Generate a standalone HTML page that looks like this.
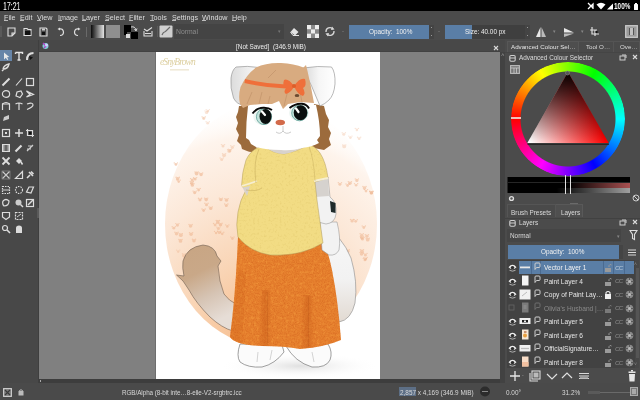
<!DOCTYPE html>
<html><head><meta charset="utf-8">
<style>
*{margin:0;padding:0;box-sizing:border-box}
html,body{width:640px;height:400px;overflow:hidden;background:#4a4a4a;font-family:"Liberation Sans",sans-serif;color:#e6e6e6}
.a{position:absolute;display:block}
.t{position:absolute;white-space:nowrap;line-height:1;will-change:transform}
</style></head><body>

<div class="a" style="left:0px;top:0px;width:640px;height:11px;background:#000;"></div>
<div class="a" style="left:0px;top:11px;width:640px;height:29px;background:#4b4b4b;"></div>
<div class="a" style="left:0px;top:40px;width:39px;height:343px;background:#484848;"></div>
<div class="a" style="left:39px;top:40px;width:466px;height:12px;background:#484848;"></div>
<div class="a" style="left:39px;top:51px;width:461px;height:1px;background:#424242;"></div>
<div class="a" style="left:39px;top:52px;width:461px;height:327px;background:#808080;"></div>
<div class="a" style="left:39px;top:379px;width:466px;height:4px;background:#3d3d3d;"></div>
<div class="a" style="left:500px;top:52px;width:5px;height:331px;background:#424242;"></div>
<div class="a" style="left:505px;top:40px;width:135px;height:343px;background:#4b4b4b;"></div>
<div class="a" style="left:0px;top:383px;width:640px;height:17px;background:#4a4a4a;"></div>
<div class="t" style="left:3px;top:2.40px;font-size:10.2px;color:#ffffff;transform:scaleX(0.68);transform-origin:0 0">17:21</div>
<div class="t" style="left:614px;top:2.40px;font-size:9.2px;color:#ffffff;transform:scaleX(0.7);transform-origin:0 0;font-weight:bold">100%</div>
<div class="a" style="left:634px;top:3.5px;width:4px;height:6px;background:#fff;border-radius:0.5px"></div>
<div class="a" style="left:635px;top:2.5px;width:2px;height:1px;background:#fff;"></div>
<svg class="a" style="left:606px;top:2px;" width="8" height="8" viewBox="0 0 8 8"><path d="M1 7.5 L7 1.5 L7 7.5 Z" fill="#fff"/></svg>
<svg class="a" style="left:596px;top:2px;" width="10" height="8" viewBox="0 0 10 8"><path d="M0.5 2.5 Q5 -1 9.5 2.5 L5 7.5 Z" fill="#fff"/></svg>
<svg class="a" style="left:587px;top:2px;" width="8" height="8" viewBox="0 0 8 8"><path d="M1 1 L6 6 M1 7 L4 4 L6 2 L6 7" stroke="#fff" stroke-width="1.3" fill="none"/></svg>
<div class="t" style="left:4px;top:14.00px;font-size:7.2px;color:#dcdcdc;">File</div>
<div class="a" style="left:4px;top:20.3px;width:3.5px;height:0.8px;background:#bdbdbd;"></div>
<div class="t" style="left:20px;top:14.00px;font-size:7.2px;color:#dcdcdc;">Edit</div>
<div class="a" style="left:20px;top:20.3px;width:3.5px;height:0.8px;background:#bdbdbd;"></div>
<div class="t" style="left:37px;top:14.00px;font-size:7.2px;color:#dcdcdc;">View</div>
<div class="a" style="left:37px;top:20.3px;width:3.5px;height:0.8px;background:#bdbdbd;"></div>
<div class="t" style="left:58px;top:14.00px;font-size:7.2px;color:#dcdcdc;">Image</div>
<div class="a" style="left:58px;top:20.3px;width:3.5px;height:0.8px;background:#bdbdbd;"></div>
<div class="t" style="left:82px;top:14.00px;font-size:7.2px;color:#dcdcdc;">Layer</div>
<div class="a" style="left:82px;top:20.3px;width:3.5px;height:0.8px;background:#bdbdbd;"></div>
<div class="t" style="left:105px;top:14.00px;font-size:7.2px;color:#dcdcdc;">Select</div>
<div class="a" style="left:105px;top:20.3px;width:3.5px;height:0.8px;background:#bdbdbd;"></div>
<div class="t" style="left:129px;top:14.00px;font-size:7.2px;color:#dcdcdc;">Filter</div>
<div class="a" style="left:129px;top:20.3px;width:3.5px;height:0.8px;background:#bdbdbd;"></div>
<div class="t" style="left:150px;top:14.00px;font-size:7.2px;color:#dcdcdc;">Tools</div>
<div class="a" style="left:150px;top:20.3px;width:3.5px;height:0.8px;background:#bdbdbd;"></div>
<div class="t" style="left:172px;top:14.00px;font-size:7.2px;color:#dcdcdc;">Settings</div>
<div class="a" style="left:172px;top:20.3px;width:3.5px;height:0.8px;background:#bdbdbd;"></div>
<div class="t" style="left:202px;top:14.00px;font-size:7.2px;color:#dcdcdc;">Window</div>
<div class="a" style="left:202px;top:20.3px;width:3.5px;height:0.8px;background:#bdbdbd;"></div>
<div class="t" style="left:232px;top:14.00px;font-size:7.2px;color:#dcdcdc;">Help</div>
<div class="a" style="left:232px;top:20.3px;width:3.5px;height:0.8px;background:#bdbdbd;"></div>
<div class="a" style="left:0px;top:26px;width:2px;height:11px;background:#5a5a5a;"></div>
<svg class="a" style="left:7px;top:27px;" width="9" height="10" viewBox="0 0 9 10"><path d="M1 1 H8 V6 L5 9 H1 Z M5 9 V6 H8" stroke="#e0e0e0" stroke-width="1.1" fill="none"/></svg>
<svg class="a" style="left:23px;top:27px;" width="9" height="10" viewBox="0 0 9 10"><path d="M1 1.5 H4 L5 2.5 H8 V8.5 H1 Z" stroke="#e0e0e0" stroke-width="1.1" fill="none"/><rect x="2" y="4" width="5.5" height="4" fill="#111"/></svg>
<svg class="a" style="left:39px;top:27px;" width="9" height="10" viewBox="0 0 9 10"><path d="M1 1 H7 L8 2 V9 H1 Z" stroke="#e0e0e0" stroke-width="1.1" fill="none"/><rect x="3" y="5" width="3" height="3" fill="#111"/><rect x="3" y="1.5" width="3" height="2" fill="#ccc"/></svg>
<svg class="a" style="left:57px;top:27px;" width="8" height="10" viewBox="0 0 8 10"><path d="M2 2 Q6 1 6.5 5 Q6.5 8.5 3 8.5" stroke="#e0e0e0" stroke-width="1.2" fill="none"/><path d="M0.5 2 L3 0.5 L3 3.5 Z" fill="#e0e0e0"/></svg>
<svg class="a" style="left:73px;top:27px;" width="8" height="10" viewBox="0 0 8 10"><path d="M6 2 Q2 1 1.5 5 Q1.5 8.5 5 8.5" stroke="#e0e0e0" stroke-width="1.2" fill="none"/><path d="M7.5 2 L5 0.5 L5 3.5 Z" fill="#e0e0e0"/></svg>
<div class="a" style="left:86px;top:27px;width:1px;height:10px;background:#6a6a6a;"></div>
<div class="a" style="left:91px;top:25px;width:13px;height:13px;background:linear-gradient(90deg,#000,#fff);opacity:.85"></div>
<div class="a" style="left:106px;top:25px;width:14px;height:13px;background:#8f8f8f;"></div>
<div class="a" style="left:124px;top:25px;width:7px;height:7px;background:#000;"></div>
<div class="a" style="left:131px;top:32px;width:7px;height:7px;background:#000;"></div>
<svg class="a" style="left:130px;top:25px;" width="8" height="7" viewBox="0 0 8 7"><path d="M1 2 Q5 1 6 5 M4.5 4 L6 6 L7 3.5" stroke="#ddd" stroke-width="1" fill="none"/></svg>
<svg class="a" style="left:124px;top:32px;" width="7" height="7" viewBox="0 0 7 7"><rect x="0" y="0" width="3" height="3" fill="#000"/><rect x="2" y="2" width="4" height="4" fill="#ddd"/></svg>
<svg class="a" style="left:143px;top:26px;" width="10" height="11" viewBox="0 0 10 11"><path d="M1 3 L4 5 L9 1.5 M1 5 V10 H9 V5" stroke="#ddd" stroke-width="1.1" fill="none"/><rect x="2" y="7" width="6" height="1" fill="#ddd"/></svg>
<div class="a" style="left:157px;top:26px;width:1px;height:11px;background:#5c5c5c;"></div>
<svg class="a" style="left:159px;top:25px;" width="14" height="13" viewBox="0 0 14 13"><rect x="0.5" y="0.5" width="13" height="12" rx="1" fill="#cfcfcf"/><path d="M3 10 Q4 7 6.5 6.5 L11 2" stroke="#6a6a6a" stroke-width="1.2" fill="none"/></svg>
<div class="a" style="left:174px;top:24px;width:110px;height:15px;background:#444444;"></div>
<div class="t" style="left:176px;top:28.70px;font-size:6.8px;color:#8c8c8c;">Normal</div>
<div class="t" style="left:278px;top:29.00px;font-size:5px;color:#777;">▾</div>
<svg class="a" style="left:289px;top:27px;" width="11" height="10" viewBox="0 0 11 10"><path d="M5 1 L9.5 5 L6 8.5 L1.5 5 Z" fill="#e4e4e4"/><path d="M1.5 5 L4 8.5 H10" stroke="#e4e4e4" stroke-width="1" fill="none"/></svg>
<svg class="a" style="left:307px;top:25px;" width="12" height="13" viewBox="0 0 12 13"><rect width="12" height="13" fill="#bdbdbd"/><rect x="0" y="0" width="4" height="4.3" fill="#eee"/><rect x="8" y="0" width="4" height="4.3" fill="#eee"/><rect x="4" y="4.3" width="4" height="4.3" fill="#eee"/><rect x="0" y="8.6" width="4" height="4.4" fill="#eee"/><rect x="8" y="8.6" width="4" height="4.4" fill="#eee"/><rect x="4" y="0" width="4" height="4.3" fill="#8a8a8a"/><rect x="0" y="4.3" width="4" height="4.3" fill="#8a8a8a"/><rect x="8" y="4.3" width="4" height="4.3" fill="#8a8a8a"/><rect x="4" y="8.6" width="4" height="4.4" fill="#8a8a8a"/></svg>
<svg class="a" style="left:324px;top:26px;" width="12" height="11" viewBox="0 0 12 11"><path d="M2 6 A4 4 0 0 1 9 3 M10 5 A4 4 0 0 1 3 8" stroke="#d8d8d8" stroke-width="1.3" fill="none"/><path d="M8 0.5 L10.5 3.5 L7 4 Z M4 10.5 L1.5 7.5 L5 7 Z" fill="#d8d8d8"/></svg>
<div class="t" style="left:341.5px;top:28.00px;font-size:6px;color:#888;">-</div>
<div class="a" style="left:349px;top:24.5px;width:80px;height:14.5px;background:#5a7ea6;"></div>
<div class="t" style="left:369px;top:28.80px;font-size:6.4px;color:#f0f0f0;">Opacity:&nbsp; 100%</div>
<div class="a" style="left:429px;top:24.5px;width:5px;height:14.5px;background:#444;"></div>
<div class="a" style="left:431px;top:27px;width:1px;height:1.2px;background:#999;"></div>
<div class="a" style="left:431px;top:34.5px;width:1px;height:1.2px;background:#999;"></div>
<div class="t" style="left:437.5px;top:28.00px;font-size:6px;color:#888;">-</div>
<div class="a" style="left:445px;top:24.5px;width:80px;height:14.5px;background:#3f3f3f;"></div>
<div class="a" style="left:445px;top:24.5px;width:27px;height:14.5px;background:#5a7ea6;"></div>
<div class="t" style="left:465px;top:28.80px;font-size:6.4px;color:#f0f0f0;">Size: 40.00 px</div>
<div class="a" style="left:525px;top:24.5px;width:5px;height:14.5px;background:#444;"></div>
<div class="a" style="left:527px;top:27px;width:1px;height:1.2px;background:#999;"></div>
<div class="a" style="left:527px;top:34.5px;width:1px;height:1.2px;background:#999;"></div>
<svg class="a" style="left:535px;top:26px;" width="12" height="12" viewBox="0 0 12 12"><path d="M5.5 1 L1 11 H5.5 Z" fill="#e8e8e8"/><path d="M6.5 1 L11 11 H6.5 Z" fill="#bbb"/></svg>
<div class="t" style="left:552.5px;top:30.00px;font-size:4.5px;color:#888;">▾</div>
<svg class="a" style="left:563px;top:27px;" width="12" height="11" viewBox="0 0 12 11"><path d="M1 1 L11 5.5 H1 Z" fill="#e8e8e8"/><path d="M1 6.5 L11 6.5 L1 10 Z" fill="#bbb"/></svg>
<div class="t" style="left:580.5px;top:30.00px;font-size:4.5px;color:#888;">▾</div>
<svg class="a" style="left:588px;top:26px;" width="13" height="11" viewBox="0 0 13 11"><path d="M4 1 V8 H11 M2 4 H9 M7 4 V10" stroke="#e0e0e0" stroke-width="1.2" fill="none"/><rect x="7.5" y="5" width="2" height="2" fill="#111"/></svg>
<svg class="a" style="left:625px;top:25px;" width="13" height="13" viewBox="0 0 13 13"><rect x="0.7" y="0.7" width="11.6" height="11.6" fill="#9a9a9a" stroke="#c8c8c8" stroke-width="1.3"/><rect x="4" y="3" width="5" height="7" fill="#555"/><rect x="5" y="3" width="3" height="7" fill="#c0c0c0"/></svg>
<svg class="a" style="left:40.5px;top:40.5px;" width="9" height="9" viewBox="0 0 9 9"><circle cx="4.5" cy="5" r="3" fill="#7fd0d8"/><path d="M2 2 L5 5 L3 7" stroke="#b040c0" stroke-width="1.5" fill="none"/><circle cx="5.5" cy="4" r="1.5" fill="#d0d0ff"/></svg>
<div class="t" style="left:235.5px;top:44.00px;font-size:6.4px;color:#ececec;">[Not Saved]&nbsp;&nbsp;(346.9 MiB)</div>
<svg class="a" style="left:493px;top:44.5px;" width="6" height="6" viewBox="0 0 6 6"><path d="M1 1 L5 5 M5 1 L1 5" stroke="#d8d8d8" stroke-width="1.1"/></svg>
<div class="t" style="left:500.5px;top:52.00px;font-size:6px;color:#999;">˄</div>
<div class="a" style="left:0px;top:50px;width:12px;height:11px;background:#6785a8;"></div>
<div class="a" style="left:38px;top:40px;width:1px;height:343px;background:#3f3f3f;"></div>
<svg class="a" style="left:1px;top:50.5px;" width="10" height="10" viewBox="0 0 10 10"><path d="M3 1.5 V8.5 L4.8 6.8 L6.3 9 L7.3 8.4 L6 6.2 L8.3 6 Z" fill="#e8e8e8"/></svg>
<svg class="a" style="left:13.5px;top:50.5px;" width="10" height="10" viewBox="0 0 10 10"><path d="M1.5 1.5 H8.5 V3 M5 1.5 V9 M3.5 9 H6.5 M1.5 1.5 V3" stroke="#e4e4e4" stroke-width="1.4" fill="none"/></svg>
<svg class="a" style="left:25px;top:50.5px;" width="10" height="10" viewBox="0 0 10 10"><path d="M2 9 Q2 2 8.5 2" stroke="#ddd" stroke-width="2" fill="none"/><path d="M4 5 L8 6.5 L5 9 Z" fill="#111"/></svg>
<svg class="a" style="left:1px;top:62px;" width="10" height="10" viewBox="0 0 10 10"><path d="M2 7 Q3 3 8 2 Q7 7 2 7 M1 9 L3 7" stroke="#ddd" stroke-width="1.4" fill="none"/></svg>
<svg class="a" style="left:1px;top:77px;" width="10" height="10" viewBox="0 0 10 10"><path d="M1.5 8.5 L8.5 1.5" stroke="#ddd" stroke-width="2"/></svg>
<svg class="a" style="left:13.5px;top:77px;" width="10" height="10" viewBox="0 0 10 10"><path d="M2 8.5 L8 1.5" stroke="#ddd" stroke-width="1.1"/></svg>
<svg class="a" style="left:25px;top:77px;" width="10" height="10" viewBox="0 0 10 10"><rect x="1.5" y="1.5" width="7" height="7" stroke="#dcdcdc" stroke-width="1.2" fill="none"/></svg>
<svg class="a" style="left:1px;top:89px;" width="10" height="10" viewBox="0 0 10 10"><ellipse cx="5" cy="5" rx="3.6" ry="3.3" stroke="#dcdcdc" stroke-width="1.2" fill="none"/></svg>
<svg class="a" style="left:13.5px;top:89px;" width="10" height="10" viewBox="0 0 10 10"><path d="M2 7 L3 3 L7 2 L8.5 5 L6 8.5 Z" stroke="#dcdcdc" stroke-width="1.2" fill="none"/></svg>
<svg class="a" style="left:25px;top:89px;" width="10" height="10" viewBox="0 0 10 10"><path d="M1.5 2 L8.5 5.5 L1.5 8 L5 5.5 Z" stroke="#dcdcdc" stroke-width="1.2" fill="none"/></svg>
<svg class="a" style="left:1px;top:101px;" width="10" height="10" viewBox="0 0 10 10"><path d="M1.5 9 V3 Q5 0 8.5 3 V9" stroke="#dcdcdc" stroke-width="1.2" fill="none"/><path d="M1 3 H9" stroke="#ddd" stroke-width="1"/></svg>
<svg class="a" style="left:13.5px;top:101px;" width="10" height="10" viewBox="0 0 10 10"><path d="M1.5 3 Q5 1 8.5 3 M5 2 V9" stroke="#dcdcdc" stroke-width="1.2" fill="none"/></svg>
<svg class="a" style="left:25px;top:101px;" width="10" height="10" viewBox="0 0 10 10"><path d="M2 3 Q8 1 8 4 Q8 6 2 8.5" stroke="#dcdcdc" stroke-width="1.2" fill="none"/></svg>
<svg class="a" style="left:1px;top:113px;" width="10" height="10" viewBox="0 0 10 10"><path d="M2 8 L3 4 L8 2 L8 6 Z" fill="#ccc"/></svg>
<svg class="a" style="left:1px;top:128px;" width="10" height="10" viewBox="0 0 10 10"><rect x="1.5" y="1.5" width="7" height="7" stroke="#dcdcdc" stroke-width="1.2" fill="none"/><rect x="4" y="4" width="2" height="2" fill="#ddd"/></svg>
<svg class="a" style="left:13.5px;top:128px;" width="10" height="10" viewBox="0 0 10 10"><path d="M5 1 V9 M1 5 H9" stroke="#ddd" stroke-width="1.5"/></svg>
<svg class="a" style="left:25px;top:128px;" width="10" height="10" viewBox="0 0 10 10"><path d="M2.5 1 V7.5 H9 M1 2.5 H7.5 V9" stroke="#ddd" stroke-width="1.2" fill="none"/><rect x="4" y="4" width="2.5" height="2.5" fill="#111"/></svg>
<svg class="a" style="left:1px;top:143px;" width="10" height="10" viewBox="0 0 10 10"><rect x="1.5" y="1.5" width="7" height="7" fill="#aaa" stroke="#ddd"/><rect x="3.5" y="2" width="3" height="6" fill="#666"/></svg>
<svg class="a" style="left:13.5px;top:143px;" width="10" height="10" viewBox="0 0 10 10"><path d="M1.5 8.5 L7.5 2.5" stroke="#ddd" stroke-width="2.2"/></svg>
<svg class="a" style="left:25px;top:143px;" width="10" height="10" viewBox="0 0 10 10"><path d="M2 8 L8 2 M3 3 H8 M2 6 L6 6" stroke="#ccc" stroke-width="1.2" fill="none"/></svg>
<svg class="a" style="left:1px;top:156px;" width="10" height="10" viewBox="0 0 10 10"><path d="M1.5 1.5 L8.5 8.5 M8.5 1.5 L1.5 8.5" stroke="#ddd" stroke-width="1.8"/></svg>
<svg class="a" style="left:13.5px;top:156px;" width="10" height="10" viewBox="0 0 10 10"><path d="M2 5 L5 2 L8 5 L5 8 Z" fill="#ddd"/><path d="M7 6 L8.5 8.5" stroke="#ddd" stroke-width="1.5"/></svg>
<svg class="a" style="left:1px;top:170px;" width="10" height="10" viewBox="0 0 10 10"><path d="M1.5 1.5 L8.5 8.5 M8.5 1.5 L1.5 8.5" stroke="#ccc" stroke-width="1.2"/><rect x="1" y="1" width="8" height="8" fill="none" stroke="#999" stroke-width=".6"/></svg>
<svg class="a" style="left:13.5px;top:170px;" width="10" height="10" viewBox="0 0 10 10"><path d="M1.5 8.5 H8.5 V1.5 Z" stroke="#dcdcdc" stroke-width="1.2" fill="none"/></svg>
<svg class="a" style="left:25px;top:170px;" width="10" height="10" viewBox="0 0 10 10"><path d="M2 8 L5 5 M4 2 L8 6 M6 1.5 L8.5 4" stroke="#ddd" stroke-width="1.6"/></svg>
<svg class="a" style="left:1px;top:185px;" width="10" height="10" viewBox="0 0 10 10"><rect x="1.5" y="1.5" width="7" height="7" stroke="#dcdcdc" stroke-width="1.2" fill="none" stroke-dasharray="1.5 1"/><path d="M1.5 5 H8.5" stroke="#ccc" stroke-width="1"/></svg>
<svg class="a" style="left:13.5px;top:185px;" width="10" height="10" viewBox="0 0 10 10"><circle cx="5" cy="5" r="3.5" stroke="#dcdcdc" stroke-width="1.2" fill="none" stroke-dasharray="1.5 1"/></svg>
<svg class="a" style="left:25px;top:185px;" width="10" height="10" viewBox="0 0 10 10"><path d="M1.5 7 L4 2 H8.5 L6 8 Z" stroke="#dcdcdc" stroke-width="1.2" fill="none"/></svg>
<svg class="a" style="left:1px;top:198px;" width="10" height="10" viewBox="0 0 10 10"><path d="M2 3 Q5 0 8 3 Q8 8 3 8 Q1 6 2 3" stroke="#dcdcdc" stroke-width="1.2" fill="none"/></svg>
<svg class="a" style="left:13.5px;top:198px;" width="10" height="10" viewBox="0 0 10 10"><circle cx="4.5" cy="4.5" r="3" fill="#ccc"/><path d="M6.5 6.5 L9 9" stroke="#ddd" stroke-width="1.4"/></svg>
<svg class="a" style="left:25px;top:198px;" width="10" height="10" viewBox="0 0 10 10"><rect x="1.5" y="1.5" width="7" height="7" stroke="#dcdcdc" stroke-width="1.2" fill="none"/><path d="M3 7 L8 2" stroke="#ddd" stroke-width="1.5"/></svg>
<svg class="a" style="left:1px;top:211px;" width="10" height="10" viewBox="0 0 10 10"><path d="M1.5 1.5 H8.5 V6 L5 8.5 L1.5 6 Z" stroke="#dcdcdc" stroke-width="1.2" fill="none"/></svg>
<svg class="a" style="left:13.5px;top:211px;" width="10" height="10" viewBox="0 0 10 10"><rect x="1.5" y="1.5" width="7" height="7" stroke="#dcdcdc" stroke-width="1.2" fill="none" stroke-dasharray="2 1"/><path d="M3 6 L7 3" stroke="#ccc" stroke-width="1"/></svg>
<svg class="a" style="left:1px;top:224px;" width="10" height="10" viewBox="0 0 10 10"><circle cx="4" cy="4" r="2.5" stroke="#dcdcdc" stroke-width="1.2" fill="none"/><path d="M6 6 L9 9" stroke="#ddd" stroke-width="1.6"/></svg>
<svg class="a" style="left:13.5px;top:224px;" width="10" height="10" viewBox="0 0 10 10"><path d="M2 9 V4 Q2 1.5 5 1.5 Q8 1.5 8 4 V9 Z" fill="#dcdcdc"/></svg>
<div class="a" style="left:37px;top:208px;width:1.5px;height:10px;background:#5a5a5a;"></div>
<svg class="a" style="left:2.5px;top:387.5px;" width="9" height="9" viewBox="0 0 9 9"><rect x="0.6" y="0.6" width="7.8" height="7.8" fill="#7a7a7a" stroke="#cfcfcf" stroke-width="1.1"/><path d="M2 2 L7 7 M7 2 L2 7" stroke="#3a3a3a" stroke-width="1.1"/></svg>
<svg class="a" style="left:18px;top:389px;" width="6" height="7" viewBox="0 0 6 7"><rect x="0.5" y="2" width="5" height="4.5" fill="#bbb"/><path d="M1.5 2.5 V1.5 Q3 0 4.5 1.5 V2.5" stroke="#bbb" fill="none"/></svg>
<div class="a" style="left:40px;top:380px;width:1px;height:2px;background:#aaa;"></div>
<div class="t" style="left:122px;top:390.00px;font-size:6.3px;color:#d8d8d8;letter-spacing:-0.05px">RGB/Alpha (8-bit inte…8-elle-V2-srgbtrc.icc</div>
<div class="a" style="left:399px;top:387px;width:17px;height:9px;background:#5d6f86;"></div>
<div class="t" style="left:400px;top:389.50px;font-size:6.4px;color:#d8d8d8;">2,857 x 4,169 (346.9 MiB)</div>
<svg class="a" style="left:479px;top:386px;" width="12" height="11" viewBox="0 0 12 11"><circle cx="6" cy="5.5" r="5" fill="#2c2c2c"/><rect x="3" y="5" width="6" height="1" fill="#888"/></svg>
<div class="t" style="left:506px;top:389.50px;font-size:6.4px;color:#d8d8d8;">0.00°</div>
<div class="t" style="left:562px;top:389.50px;font-size:6.4px;color:#d8d8d8;">31.2%</div>
<div class="a" style="left:588px;top:391.5px;width:42px;height:1px;background:#6a6a6a;"></div>
<div class="a" style="left:588px;top:390.5px;width:12px;height:3px;background:#5a5a5a;"></div>
<svg class="a" style="left:630px;top:387px;" width="8" height="9" viewBox="0 0 8 9"><rect x="0.5" y="0.5" width="7" height="8" fill="#777" stroke="#aaa"/><rect x="2" y="2" width="4" height="5" fill="#aaa"/></svg>
<div class="a" style="left:507px;top:40.5px;width:72px;height:11.5px;background:#4e4e4e;border:1px solid #575757;border-bottom:none"></div>
<div class="a" style="left:579px;top:40.5px;width:35px;height:11.5px;background:#4a4a4a;border:1px solid #545454;border-bottom:none;border-left:none"></div>
<div class="a" style="left:614px;top:40.5px;width:26px;height:11.5px;background:#4a4a4a;border:1px solid #545454;border-bottom:none;border-left:none"></div>
<div class="t" style="left:511px;top:44.00px;font-size:6.2px;color:#e4e4e4;">Advanced Colour Sel…</div>
<div class="t" style="left:586px;top:44.00px;font-size:6.2px;color:#dcdcdc;">Tool O…</div>
<div class="a" style="left:505px;top:52px;width:135px;height:1px;background:#454545;"></div>
<div class="t" style="left:620px;top:44.00px;font-size:6.2px;color:#dcdcdc;">Ove…</div>
<svg class="a" style="left:509px;top:54px;" width="7" height="8" viewBox="0 0 7 8"><rect x="0.8" y="1.5" width="5.4" height="5.8" rx="1.2" fill="none" stroke="#cfcfcf" stroke-width="1.1"/><path d="M1 4 H6" stroke="#cfcfcf"/></svg>
<div class="t" style="left:519px;top:54.50px;font-size:6.4px;color:#dcdcdc;">Advanced Colour Selector</div>
<svg class="a" style="left:619px;top:54px;" width="8" height="7" viewBox="0 0 8 7"><rect x="1" y="2" width="5" height="4" fill="none" stroke="#ccc" stroke-width="1"/><path d="M3 1 H7 V4" stroke="#ccc" fill="none"/></svg>
<svg class="a" style="left:632px;top:54px;" width="6" height="6" viewBox="0 0 6 6"><path d="M1 1 L5 5 M5 1 L1 5" stroke="#dcdcdc" stroke-width="1.1"/></svg>
<svg class="a" style="left:510px;top:65px;" width="10" height="9" viewBox="0 0 10 9"><rect x="0.6" y="0.6" width="8.8" height="7.8" fill="#777" stroke="#bbb" stroke-width="1.1"/><path d="M1 3 H9 M4 3 V8 M6.5 3 V8" stroke="#ccc" stroke-width=".8"/></svg>
<div class="a" style="left:511px;top:62px;width:114px;height:114px;border-radius:50%;background:conic-gradient(from -90deg,#f00,#ff0,#0f0,#0ff,#00f,#f0f,#f00);-webkit-mask:radial-gradient(circle,transparent 47px,#000 48px);mask:radial-gradient(circle,transparent 47px,#000 48px)"></div>
<svg class="a" style="left:505px;top:60px" width="135" height="100" viewBox="505 60 135 100"><defs>
<linearGradient id="tg1" gradientUnits="userSpaceOnUse" x1="530" y1="140" x2="600" y2="120"><stop offset="0" stop-color="#fff"/><stop offset="1" stop-color="#f00"/></linearGradient>
<linearGradient id="tg2" gradientUnits="userSpaceOnUse" x1="568" y1="143" x2="568" y2="72"><stop offset="0" stop-color="#000" stop-opacity="0"/><stop offset="1" stop-color="#000" stop-opacity="1"/></linearGradient>
</defs><path d="M568 72 L608.7 143 L527.3 143 Z" fill="url(#tg1)"/><path d="M568 72 L608.7 143 L527.3 143 Z" fill="url(#tg2)"/>
<path d="M527.5 144.2 H609" stroke="#1a1a1a" stroke-width="1"/><circle cx="567.5" cy="73" r="2" fill="#555" stroke="#888" stroke-width=".6"/></svg>
<div class="a" style="left:511px;top:117.3px;width:9.5px;height:1.6px;background:#f0c0b8;"></div>
<div class="a" style="left:507px;top:176.5px;width:123px;height:16.5px;background:#262626;"></div>
<div class="a" style="left:507.5px;top:177px;width:122px;height:5px;background:#000;"></div>
<div class="a" style="left:507.5px;top:183px;width:122px;height:4.5px;background:linear-gradient(90deg,#000 0%,#000 50%,#a85050 100%);"></div>
<div class="a" style="left:507.5px;top:188px;width:122px;height:4.5px;background:linear-gradient(90deg,#000 0%,#000 40%,#a0a0a0 100%);"></div>
<div class="a" style="left:565px;top:175px;width:1px;height:19px;background:#e0e0e0;"></div>
<div class="a" style="left:569.5px;top:175px;width:1px;height:19px;background:#e0e0e0;"></div>
<svg class="a" style="left:508px;top:195px;" width="7" height="7" viewBox="0 0 7 7"><circle cx="3.5" cy="3.5" r="2.6" fill="#ddd"/><circle cx="3.5" cy="3.5" r="1.2" fill="#555"/></svg>
<svg class="a" style="left:632px;top:194px;" width="8" height="8" viewBox="0 0 8 8"><circle cx="4" cy="4" r="3" fill="none" stroke="#ccc" stroke-width="1"/><path d="M2 2 L6 6" stroke="#ccc"/></svg>
<div class="a" style="left:570px;top:202.5px;width:8px;height:1px;background:#6a6a6a;"></div>
<div class="a" style="left:507px;top:203.5px;width:49px;height:13.5px;background:#4a4a4a;border:1px solid #555;border-bottom:none"></div>
<div class="a" style="left:556px;top:203.5px;width:27px;height:13.5px;background:#4f4f4f;border:1px solid #595959;border-bottom:none;border-left:none"></div>
<div class="t" style="left:511px;top:209.50px;font-size:6.4px;color:#dcdcdc;">Brush Presets</div>
<div class="t" style="left:561px;top:209.50px;font-size:6.4px;color:#dcdcdc;">Layers</div>
<div class="a" style="left:505px;top:217.5px;width:135px;height:1px;background:#414141;"></div>
<svg class="a" style="left:509px;top:219px;" width="7" height="8" viewBox="0 0 7 8"><rect x="0.8" y="1.5" width="5.4" height="5.8" rx="1.2" fill="none" stroke="#cfcfcf" stroke-width="1.1"/><path d="M1 4 H6" stroke="#cfcfcf"/></svg>
<div class="t" style="left:519px;top:220.00px;font-size:6.4px;color:#dcdcdc;">Layers</div>
<svg class="a" style="left:619px;top:219px;" width="8" height="7" viewBox="0 0 8 7"><rect x="1" y="2" width="5" height="4" fill="none" stroke="#ccc" stroke-width="1"/><path d="M3 1 H7 V4" stroke="#ccc" fill="none"/></svg>
<svg class="a" style="left:632px;top:219px;" width="6" height="6" viewBox="0 0 6 6"><path d="M1 1 L5 5 M5 1 L1 5" stroke="#dcdcdc" stroke-width="1.1"/></svg>
<div class="a" style="left:507px;top:229px;width:114px;height:13px;background:#454545;"></div>
<div class="t" style="left:510px;top:233.00px;font-size:6.4px;color:#d8d8d8;">Normal</div>
<div class="t" style="left:616.5px;top:234.50px;font-size:4.5px;color:#888;">▾</div>
<svg class="a" style="left:629px;top:229px;" width="9" height="12" viewBox="0 0 9 12"><path d="M1 1.5 H8 L5.5 5.5 V10.5 L3.5 9.5 V5.5 Z" fill="none" stroke="#ddd" stroke-width="1.1"/></svg>
<div class="a" style="left:507.5px;top:245px;width:111px;height:14px;background:#5a7ea6;"></div>
<div class="t" style="left:541px;top:249.20px;font-size:6.4px;color:#f0f0f0;">Opacity:&nbsp; 100%</div>
<div class="a" style="left:619px;top:245px;width:4px;height:14px;background:#444;"></div>
<svg class="a" style="left:628px;top:249px;" width="8" height="7" viewBox="0 0 8 7"><path d="M0 1 H8 M0 3.5 H8 M0 6 H8" stroke="#d8d8d8" stroke-width="1.2"/></svg>
<div class="a" style="left:507px;top:260px;width:128px;height:108px;background:#424242;"></div>
<div class="a" style="left:635px;top:260px;width:4px;height:108px;background:#474747;"></div>
<div class="a" style="left:635.5px;top:268px;width:3px;height:90px;background:#555555;"></div>
<div class="t" style="left:634px;top:262.00px;font-size:5px;color:#888;">˄</div>
<div class="t" style="left:634px;top:362.00px;font-size:5px;color:#888;">˅</div>
<div class="a" style="left:519px;top:260.5px;width:115px;height:13.3px;background:#5a7ea6;"></div>
<div class="a" style="left:531px;top:260.5px;width:1px;height:13.3px;background:#4a6a90;"></div>
<div class="a" style="left:540px;top:260.5px;width:1px;height:13.3px;background:#4a6a90;"></div>
<div class="a" style="left:603px;top:260.5px;width:1px;height:13.3px;background:#4a6a90;"></div>
<div class="a" style="left:613px;top:260.5px;width:1px;height:13.3px;background:#4a6a90;"></div>
<div class="a" style="left:624px;top:260.5px;width:1px;height:13.3px;background:#4a6a90;"></div>
<svg class="a" style="left:508px;top:263.0px;" width="9" height="9" viewBox="0 0 9 9"><path d="M0.5 4.2 Q4.5 -0.5 8.5 4.2 Q4.5 8.5 0.5 4.2 Z" fill="#f0f0f0"/><ellipse cx="4.5" cy="4.6" rx="1.8" ry="1.6" fill="#2a2a2a"/><path d="M1.5 7.3 Q4.5 9 7.5 7.3" stroke="#bbb" stroke-width=".9" fill="none"/></svg>
<div class="t" style="left:544px;top:265.10px;font-size:6.6px;color:#f2f2f2;">Vector Layer 1</div>
<svg class="a" style="left:533px;top:261.5px;" width="8" height="9" viewBox="0 0 8 9"><path d="M2 7.5 V2 Q2 1 3 1 H6 Q7 1 7 2 V4.5 Q7 5.5 6 5.5 H3.5 Z" fill="none" stroke="#cfcfcf" stroke-width="1"/></svg>
<svg class="a" style="left:604px;top:263.0px;" width="8" height="9" viewBox="0 0 8 9"><path d="M5 4 V2.6 Q6 0.6 7.5 2" fill="none" stroke="#9a9a9a" stroke-width="1"/><rect x="1" y="5" width="6" height="4" fill="#9a9a9a"/></svg>
<div class="t" style="left:615px;top:264.80px;font-size:6.2px;color:#b8c8d8;letter-spacing:-0.8px;font-style:italic">CC</div>
<svg class="a" style="left:508px;top:276.55px;" width="9" height="9" viewBox="0 0 9 9"><path d="M0.5 4.2 Q4.5 -0.5 8.5 4.2 Q4.5 8.5 0.5 4.2 Z" fill="#f0f0f0"/><ellipse cx="4.5" cy="4.6" rx="1.8" ry="1.6" fill="#2a2a2a"/><path d="M1.5 7.3 Q4.5 9 7.5 7.3" stroke="#bbb" stroke-width=".9" fill="none"/></svg>
<div class="t" style="left:544px;top:278.65px;font-size:6.6px;color:#e6e6e6;">Paint Layer 4</div>
<svg class="a" style="left:533px;top:275.05px;" width="8" height="9" viewBox="0 0 8 9"><path d="M2 7.5 V2 Q2 1 3 1 H6 Q7 1 7 2 V4.5 Q7 5.5 6 5.5 H3.5 Z" fill="none" stroke="#cfcfcf" stroke-width="1"/></svg>
<svg class="a" style="left:604px;top:276.55px;" width="8" height="9" viewBox="0 0 8 9"><path d="M5 4 V2.6 Q6 0.6 7.5 2" fill="none" stroke="#9a9a9a" stroke-width="1"/><rect x="1" y="5" width="6" height="4" fill="#9a9a9a"/></svg>
<div class="t" style="left:615px;top:278.35px;font-size:6.2px;color:#8a8a8a;letter-spacing:-0.8px;font-style:italic">CC</div>
<svg class="a" style="left:625px;top:276.55px;" width="9" height="9" viewBox="0 0 9 9"><circle cx="4.5" cy="4.5" r="3.8" fill="#8a8a8a"/><path d="M4.5 0.5 V8.5 M0.5 4.5 H8.5" stroke="#555" stroke-width=".9"/><circle cx="4.5" cy="4.5" r="1.5" fill="#bbb"/></svg>
<svg class="a" style="left:508px;top:290.1px;" width="9" height="9" viewBox="0 0 9 9"><path d="M0.5 4.2 Q4.5 -0.5 8.5 4.2 Q4.5 8.5 0.5 4.2 Z" fill="#f0f0f0"/><ellipse cx="4.5" cy="4.6" rx="1.8" ry="1.6" fill="#2a2a2a"/><path d="M1.5 7.3 Q4.5 9 7.5 7.3" stroke="#bbb" stroke-width=".9" fill="none"/></svg>
<div class="t" style="left:544px;top:292.20px;font-size:6.6px;color:#e6e6e6;">Copy of Paint Lay…</div>
<svg class="a" style="left:533px;top:288.6px;" width="8" height="9" viewBox="0 0 8 9"><path d="M2 7.5 V2 Q2 1 3 1 H6 Q7 1 7 2 V4.5 Q7 5.5 6 5.5 H3.5 Z" fill="none" stroke="#cfcfcf" stroke-width="1"/></svg>
<svg class="a" style="left:604px;top:290.1px;" width="8" height="9" viewBox="0 0 8 9"><path d="M2 4 V2.6 Q4 0.4 6 2.6 V4" fill="none" stroke="#f0f0f0" stroke-width="1.1"/><rect x="1" y="4" width="6" height="5" fill="#f0f0f0"/></svg>
<div class="t" style="left:615px;top:291.90px;font-size:6.2px;color:#8a8a8a;letter-spacing:-0.8px;font-style:italic">CC</div>
<svg class="a" style="left:625px;top:290.1px;" width="9" height="9" viewBox="0 0 9 9"><circle cx="4.5" cy="4.5" r="3.8" fill="#8a8a8a"/><path d="M4.5 0.5 V8.5 M0.5 4.5 H8.5" stroke="#555" stroke-width=".9"/><circle cx="4.5" cy="4.5" r="1.5" fill="#bbb"/></svg>
<svg class="a" style="left:508px;top:304.15px;" width="8" height="7" viewBox="0 0 8 7"><rect x="1" y="1" width="5" height="5" fill="none" stroke="#666" stroke-width=".8"/></svg>
<div class="t" style="left:544px;top:305.75px;font-size:6.6px;color:#8a8a8a;">Olivia's Husband |…</div>
<svg class="a" style="left:533px;top:302.15px;" width="8" height="9" viewBox="0 0 8 9"><path d="M2 7.5 V2 Q2 1 3 1 H6 Q7 1 7 2 V4.5 Q7 5.5 6 5.5 H3.5 Z" fill="none" stroke="#6e6e6e" stroke-width="1"/></svg>
<svg class="a" style="left:604px;top:303.65px;" width="8" height="9" viewBox="0 0 8 9"><path d="M5 4 V2.6 Q6 0.6 7.5 2" fill="none" stroke="#7a7a7a" stroke-width="1"/><rect x="1" y="5" width="6" height="4" fill="#7a7a7a"/></svg>
<div class="t" style="left:615px;top:305.45px;font-size:6.2px;color:#8a8a8a;letter-spacing:-0.8px;font-style:italic">CC</div>
<svg class="a" style="left:625px;top:303.65px;" width="9" height="9" viewBox="0 0 9 9"><circle cx="4.5" cy="4.5" r="3.8" fill="#8a8a8a"/><path d="M4.5 0.5 V8.5 M0.5 4.5 H8.5" stroke="#555" stroke-width=".9"/><circle cx="4.5" cy="4.5" r="1.5" fill="#bbb"/></svg>
<svg class="a" style="left:508px;top:317.2px;" width="9" height="9" viewBox="0 0 9 9"><path d="M0.5 4.2 Q4.5 -0.5 8.5 4.2 Q4.5 8.5 0.5 4.2 Z" fill="#f0f0f0"/><ellipse cx="4.5" cy="4.6" rx="1.8" ry="1.6" fill="#2a2a2a"/><path d="M1.5 7.3 Q4.5 9 7.5 7.3" stroke="#bbb" stroke-width=".9" fill="none"/></svg>
<div class="t" style="left:544px;top:319.30px;font-size:6.6px;color:#e6e6e6;">Paint Layer 5</div>
<svg class="a" style="left:533px;top:315.7px;" width="8" height="9" viewBox="0 0 8 9"><path d="M2 7.5 V2 Q2 1 3 1 H6 Q7 1 7 2 V4.5 Q7 5.5 6 5.5 H3.5 Z" fill="none" stroke="#cfcfcf" stroke-width="1"/></svg>
<svg class="a" style="left:604px;top:317.2px;" width="8" height="9" viewBox="0 0 8 9"><path d="M5 4 V2.6 Q6 0.6 7.5 2" fill="none" stroke="#9a9a9a" stroke-width="1"/><rect x="1" y="5" width="6" height="4" fill="#9a9a9a"/></svg>
<div class="t" style="left:615px;top:319.00px;font-size:6.2px;color:#8a8a8a;letter-spacing:-0.8px;font-style:italic">CC</div>
<svg class="a" style="left:625px;top:317.2px;" width="9" height="9" viewBox="0 0 9 9"><circle cx="4.5" cy="4.5" r="3.8" fill="#8a8a8a"/><path d="M4.5 0.5 V8.5 M0.5 4.5 H8.5" stroke="#555" stroke-width=".9"/><circle cx="4.5" cy="4.5" r="1.5" fill="#bbb"/></svg>
<svg class="a" style="left:508px;top:330.75px;" width="9" height="9" viewBox="0 0 9 9"><path d="M0.5 4.2 Q4.5 -0.5 8.5 4.2 Q4.5 8.5 0.5 4.2 Z" fill="#f0f0f0"/><ellipse cx="4.5" cy="4.6" rx="1.8" ry="1.6" fill="#2a2a2a"/><path d="M1.5 7.3 Q4.5 9 7.5 7.3" stroke="#bbb" stroke-width=".9" fill="none"/></svg>
<div class="t" style="left:544px;top:332.85px;font-size:6.6px;color:#e6e6e6;">Paint Layer 6</div>
<svg class="a" style="left:533px;top:329.25px;" width="8" height="9" viewBox="0 0 8 9"><path d="M2 7.5 V2 Q2 1 3 1 H6 Q7 1 7 2 V4.5 Q7 5.5 6 5.5 H3.5 Z" fill="none" stroke="#cfcfcf" stroke-width="1"/></svg>
<svg class="a" style="left:604px;top:330.75px;" width="8" height="9" viewBox="0 0 8 9"><path d="M5 4 V2.6 Q6 0.6 7.5 2" fill="none" stroke="#9a9a9a" stroke-width="1"/><rect x="1" y="5" width="6" height="4" fill="#9a9a9a"/></svg>
<div class="t" style="left:615px;top:332.55px;font-size:6.2px;color:#8a8a8a;letter-spacing:-0.8px;font-style:italic">CC</div>
<svg class="a" style="left:625px;top:330.75px;" width="9" height="9" viewBox="0 0 9 9"><circle cx="4.5" cy="4.5" r="3.8" fill="#8a8a8a"/><path d="M4.5 0.5 V8.5 M0.5 4.5 H8.5" stroke="#555" stroke-width=".9"/><circle cx="4.5" cy="4.5" r="1.5" fill="#bbb"/></svg>
<svg class="a" style="left:508px;top:344.3px;" width="9" height="9" viewBox="0 0 9 9"><path d="M0.5 4.2 Q4.5 -0.5 8.5 4.2 Q4.5 8.5 0.5 4.2 Z" fill="#f0f0f0"/><ellipse cx="4.5" cy="4.6" rx="1.8" ry="1.6" fill="#2a2a2a"/><path d="M1.5 7.3 Q4.5 9 7.5 7.3" stroke="#bbb" stroke-width=".9" fill="none"/></svg>
<div class="t" style="left:544px;top:346.40px;font-size:6.6px;color:#e6e6e6;">OfficialSignature…</div>
<svg class="a" style="left:533px;top:342.8px;" width="8" height="9" viewBox="0 0 8 9"><path d="M2 7.5 V2 Q2 1 3 1 H6 Q7 1 7 2 V4.5 Q7 5.5 6 5.5 H3.5 Z" fill="none" stroke="#cfcfcf" stroke-width="1"/></svg>
<svg class="a" style="left:604px;top:344.3px;" width="8" height="9" viewBox="0 0 8 9"><path d="M5 4 V2.6 Q6 0.6 7.5 2" fill="none" stroke="#9a9a9a" stroke-width="1"/><rect x="1" y="5" width="6" height="4" fill="#9a9a9a"/></svg>
<div class="t" style="left:615px;top:346.10px;font-size:6.2px;color:#8a8a8a;letter-spacing:-0.8px;font-style:italic">CC</div>
<svg class="a" style="left:625px;top:344.3px;" width="9" height="9" viewBox="0 0 9 9"><circle cx="4.5" cy="4.5" r="3.8" fill="#8a8a8a"/><path d="M4.5 0.5 V8.5 M0.5 4.5 H8.5" stroke="#555" stroke-width=".9"/><circle cx="4.5" cy="4.5" r="1.5" fill="#bbb"/></svg>
<svg class="a" style="left:508px;top:357.85px;" width="9" height="9" viewBox="0 0 9 9"><path d="M0.5 4.2 Q4.5 -0.5 8.5 4.2 Q4.5 8.5 0.5 4.2 Z" fill="#f0f0f0"/><ellipse cx="4.5" cy="4.6" rx="1.8" ry="1.6" fill="#2a2a2a"/><path d="M1.5 7.3 Q4.5 9 7.5 7.3" stroke="#bbb" stroke-width=".9" fill="none"/></svg>
<div class="t" style="left:544px;top:359.95px;font-size:6.6px;color:#e6e6e6;">Paint Layer 8</div>
<svg class="a" style="left:533px;top:356.35px;" width="8" height="9" viewBox="0 0 8 9"><path d="M2 7.5 V2 Q2 1 3 1 H6 Q7 1 7 2 V4.5 Q7 5.5 6 5.5 H3.5 Z" fill="none" stroke="#cfcfcf" stroke-width="1"/></svg>
<svg class="a" style="left:604px;top:357.85px;" width="8" height="9" viewBox="0 0 8 9"><path d="M5 4 V2.6 Q6 0.6 7.5 2" fill="none" stroke="#9a9a9a" stroke-width="1"/><rect x="1" y="5" width="6" height="4" fill="#9a9a9a"/></svg>
<div class="t" style="left:615px;top:359.65px;font-size:6.2px;color:#8a8a8a;letter-spacing:-0.8px;font-style:italic">CC</div>
<svg class="a" style="left:625px;top:357.85px;" width="9" height="9" viewBox="0 0 9 9"><circle cx="4.5" cy="4.5" r="3.8" fill="#8a8a8a"/><path d="M4.5 0.5 V8.5 M0.5 4.5 H8.5" stroke="#555" stroke-width=".9"/><circle cx="4.5" cy="4.5" r="1.5" fill="#bbb"/></svg>
<svg class="a" style="left:519px;top:261.5px;" width="12" height="11" viewBox="0 0 12 11"><rect x="0" y="0" width="12" height="11" fill="#5a7ea6"/><rect x="1" y="4.5" width="10" height="1.8" fill="#e8e8e8"/></svg>
<svg class="a" style="left:519px;top:275.05px;" width="12" height="11" viewBox="0 0 12 11"><rect x="3" y="0.5" width="6.5" height="10" fill="#f4f4f4"/></svg>
<svg class="a" style="left:519px;top:288.6px;" width="12" height="11" viewBox="0 0 12 11"><rect x="0.5" y="0.5" width="11" height="10" fill="#f0f0f0"/><path d="M3 7 L8 3" stroke="#bbb"/></svg>
<svg class="a" style="left:519px;top:302.15px;" width="12" height="11" viewBox="0 0 12 11"><rect x="3" y="0.5" width="6.5" height="10" fill="#7a7a7a"/><rect x="4.5" y="3" width="3" height="4" fill="#888"/></svg>
<svg class="a" style="left:519px;top:315.7px;" width="12" height="11" viewBox="0 0 12 11"><rect x="0.5" y="2" width="11" height="6" fill="#f0f0f0"/><rect x="3" y="4" width="6" height="2.5" fill="#222"/><rect x="5" y="4.5" width="2" height="1.5" fill="#eee"/></svg>
<svg class="a" style="left:519px;top:329.25px;" width="12" height="11" viewBox="0 0 12 11"><rect x="3" y="0.5" width="6.5" height="10" fill="#f6e8d8"/><circle cx="6" cy="6.5" r="2" fill="#e8a040"/><rect x="5" y="2" width="2.5" height="2" fill="#c89070"/></svg>
<svg class="a" style="left:519px;top:342.8px;" width="12" height="11" viewBox="0 0 12 11"><rect x="0.5" y="2" width="11" height="6.5" fill="#f0f0f0"/><path d="M2 5.5 H10" stroke="#bbb" stroke-width="1.3"/></svg>
<svg class="a" style="left:519px;top:356.35px;" width="12" height="11" viewBox="0 0 12 11"><rect x="3" y="0.5" width="6.5" height="10" fill="#f8ddc8"/><rect x="3" y="6" width="6.5" height="4.5" fill="#f2c0a0"/></svg>
<svg class="a" style="left:509px;top:370px;" width="12" height="12" viewBox="0 0 12 12"><path d="M6 1 V11 M1 6 H11" stroke="#e6e6e6" stroke-width="1.3"/></svg>
<div class="t" style="left:522px;top:373.00px;font-size:5px;color:#999;">-</div>
<svg class="a" style="left:529px;top:370px;" width="12" height="12" viewBox="0 0 12 12"><rect x="3" y="1" width="8" height="8" fill="none" stroke="#dcdcdc" stroke-width="1.1"/><path d="M1 3 V11 H9" fill="none" stroke="#dcdcdc" stroke-width="1.1"/><rect x="4.5" y="2.5" width="5" height="5" fill="#bbb"/></svg>
<svg class="a" style="left:546px;top:371px;" width="12" height="10" viewBox="0 0 12 10"><path d="M1 3 L6 8 L11 3" fill="none" stroke="#e0e0e0" stroke-width="1.2"/></svg>
<svg class="a" style="left:561px;top:371px;" width="12" height="10" viewBox="0 0 12 10"><path d="M1 7 L6 2 L11 7" fill="none" stroke="#e0e0e0" stroke-width="1.2"/></svg>
<svg class="a" style="left:579px;top:371px;" width="11" height="10" viewBox="0 0 11 10"><path d="M0 2.5 H10 M0 5 H10 M0 7.5 H10" stroke="#d8d8d8" stroke-width="1.1"/><rect x="1" y="4.5" width="8" height="3" fill="#999"/></svg>
<svg class="a" style="left:628px;top:370px;" width="8" height="12" viewBox="0 0 8 12"><rect x="0.5" y="1.5" width="7" height="1.5" fill="#e6e6e6"/><rect x="3" y="0" width="2" height="1.5" fill="#e6e6e6"/><path d="M1 4 H7 L6.5 11.5 H1.5 Z" fill="#e6e6e6"/></svg>
<svg class="a" style="left:0;top:0" width="640" height="400" viewBox="0 0 640 400">
<defs>
<clipPath id="pg"><rect x="156" y="52" width="224" height="327"/></clipPath>
<radialGradient id="peach" cx="0.45" cy="1.0" r="1.0" fx="0.4" fy="0.95"><stop offset="0" stop-color="#f6bd8e"/><stop offset="0.3" stop-color="#f9d4b4"/><stop offset="0.62" stop-color="#fce8d8"/><stop offset="0.85" stop-color="#fef4ec"/><stop offset="1" stop-color="#ffffff" stop-opacity="0"/></radialGradient>
<linearGradient id="tailg" x1="0" y1="0" x2="0.35" y2="1"><stop offset="0" stop-color="#c8a583"/><stop offset="0.4" stop-color="#c9a888"/><stop offset="0.7" stop-color="#d6c4b4"/><stop offset="1" stop-color="#e6ddd6"/></linearGradient>
<linearGradient id="tail2" x1="0" y1="0" x2="0" y2="1"><stop offset="0" stop-color="#f8f8f8"/><stop offset="0.55" stop-color="#f2f2f2"/><stop offset="1" stop-color="#e2dad2"/></linearGradient>
<linearGradient id="earg" x1="0" y1="0" x2="1" y2="0"><stop offset="0" stop-color="#dcdcdc"/><stop offset="1" stop-color="#fafafa"/></linearGradient>
<linearGradient id="earg2" x1="0" y1="0" x2="1" y2="0"><stop offset="0" stop-color="#d8d8d8"/><stop offset="0.5" stop-color="#f6f6f6"/><stop offset="1" stop-color="#ffffff"/></linearGradient>
<radialGradient id="shadow" cx="0.5" cy="0.5" r="0.5"><stop offset="0" stop-color="#e0e0e0"/><stop offset="1" stop-color="#ffffff" stop-opacity="0"/></radialGradient>
<filter id="noise" x="0" y="0" width="1" height="1" color-interpolation-filters="sRGB"><feTurbulence type="fractalNoise" baseFrequency="0.9" numOctaves="1" seed="3"/><feColorMatrix values="0 0 0 0 0.78  0 0 0 0 0.33  0 0 0 0 0.08  0 0 0 1.8 -0.75"/><feComposite in2="SourceGraphic" operator="in"/></filter>
<filter id="noise2" x="0" y="0" width="1" height="1" color-interpolation-filters="sRGB"><feTurbulence type="fractalNoise" baseFrequency="0.35" numOctaves="2" seed="11"/><feColorMatrix values="0 0 0 0 0.96  0 0 0 0 0.62  0 0 0 0 0.25  0 0 0 2.2 -1.05"/><feComposite in2="SourceGraphic" operator="in"/></filter>
<linearGradient id="fold" x1="0" y1="0" x2="1" y2="0"><stop offset="0" stop-color="#c85a18" stop-opacity="0"/><stop offset="0.5" stop-color="#c85a18" stop-opacity="0.45"/><stop offset="1" stop-color="#c85a18" stop-opacity="0"/></linearGradient>
<filter id="noise3" x="0" y="0" width="1" height="1" color-interpolation-filters="sRGB"><feTurbulence type="fractalNoise" baseFrequency="0.45" numOctaves="2" seed="5"/><feColorMatrix values="0 0 0 0 0.88  0 0 0 0 0.78  0 0 0 0 0.42  0 0 0 2.4 -1.25"/><feComposite in2="SourceGraphic" operator="in"/></filter>
</defs>
<rect x="155" y="52" width="1" height="327" fill="#6e6e6e"/>
<g clip-path="url(#pg)">
<rect x="156" y="52" width="224" height="327" fill="#ffffff"/>
<ellipse cx="271" cy="224" rx="106" ry="123" fill="url(#peach)"/>
<g opacity="0.35"><circle cx="206.6" cy="112.4" r="1.7" fill="#eeb48e"/><circle cx="205.0" cy="110.9" r="0.7" fill="#eeb48e"/><circle cx="208.2" cy="110.9" r="0.7" fill="#eeb48e"/></g><g opacity="0.35"><circle cx="203.8" cy="118.6" r="1.5" fill="#eeb48e"/><circle cx="202.2" cy="117.1" r="0.7" fill="#eeb48e"/><circle cx="205.4" cy="117.1" r="0.7" fill="#eeb48e"/></g><g opacity="0.35"><circle cx="203.6" cy="118.1" r="1.3" fill="#eeb48e"/><circle cx="202.0" cy="116.6" r="0.7" fill="#eeb48e"/><circle cx="205.2" cy="116.6" r="0.7" fill="#eeb48e"/></g><g opacity="0.35"><circle cx="207.8" cy="111.1" r="1.4" fill="#eeb48e"/><circle cx="206.2" cy="109.6" r="0.7" fill="#eeb48e"/><circle cx="209.4" cy="109.6" r="0.7" fill="#eeb48e"/></g><g opacity="0.35"><circle cx="207.7" cy="123.2" r="1.4" fill="#eeb48e"/><circle cx="206.1" cy="121.7" r="0.7" fill="#eeb48e"/><circle cx="209.3" cy="121.7" r="0.7" fill="#eeb48e"/></g><g opacity="0.4"><circle cx="224.1" cy="155.3" r="1.9" fill="#eeb48e"/><circle cx="222.5" cy="153.8" r="0.7" fill="#eeb48e"/><circle cx="225.7" cy="153.8" r="0.7" fill="#eeb48e"/></g><g opacity="0.4"><circle cx="229.1" cy="151.1" r="1.9" fill="#eeb48e"/><circle cx="227.5" cy="149.6" r="0.7" fill="#eeb48e"/><circle cx="230.7" cy="149.6" r="0.7" fill="#eeb48e"/></g><g opacity="0.4"><circle cx="221.7" cy="159.5" r="1.5" fill="#eeb48e"/><circle cx="220.1" cy="158.0" r="0.7" fill="#eeb48e"/><circle cx="223.3" cy="158.0" r="0.7" fill="#eeb48e"/></g><g opacity="0.4"><circle cx="223.0" cy="146.1" r="1.5" fill="#eeb48e"/><circle cx="221.4" cy="144.6" r="0.7" fill="#eeb48e"/><circle cx="224.6" cy="144.6" r="0.7" fill="#eeb48e"/></g><g opacity="0.4"><circle cx="232.4" cy="147.3" r="1.6" fill="#eeb48e"/><circle cx="230.8" cy="145.8" r="0.7" fill="#eeb48e"/><circle cx="234.0" cy="145.8" r="0.7" fill="#eeb48e"/></g><g opacity="0.4"><circle cx="229.9" cy="150.7" r="1.6" fill="#eeb48e"/><circle cx="228.3" cy="149.2" r="0.7" fill="#eeb48e"/><circle cx="231.5" cy="149.2" r="0.7" fill="#eeb48e"/></g><g opacity="0.6"><circle cx="175.9" cy="164.4" r="1.4" fill="#eeb48e"/><circle cx="174.3" cy="162.9" r="0.7" fill="#eeb48e"/><circle cx="177.5" cy="162.9" r="0.7" fill="#eeb48e"/></g><g opacity="0.6"><circle cx="195.1" cy="179.1" r="1.5" fill="#eeb48e"/><circle cx="193.5" cy="177.6" r="0.7" fill="#eeb48e"/><circle cx="196.7" cy="177.6" r="0.7" fill="#eeb48e"/></g><g opacity="0.6"><circle cx="192.2" cy="180.1" r="1.5" fill="#eeb48e"/><circle cx="190.6" cy="178.6" r="0.7" fill="#eeb48e"/><circle cx="193.8" cy="178.6" r="0.7" fill="#eeb48e"/></g><g opacity="0.6"><circle cx="198.6" cy="190.0" r="1.4" fill="#eeb48e"/><circle cx="197.0" cy="188.5" r="0.7" fill="#eeb48e"/><circle cx="200.2" cy="188.5" r="0.7" fill="#eeb48e"/></g><g opacity="0.6"><circle cx="191.8" cy="183.0" r="1.8" fill="#eeb48e"/><circle cx="190.2" cy="181.5" r="0.7" fill="#eeb48e"/><circle cx="193.4" cy="181.5" r="0.7" fill="#eeb48e"/></g><g opacity="0.6"><circle cx="196.6" cy="173.5" r="1.9" fill="#eeb48e"/><circle cx="195.0" cy="172.0" r="0.7" fill="#eeb48e"/><circle cx="198.2" cy="172.0" r="0.7" fill="#eeb48e"/></g><g opacity="0.6"><circle cx="177.7" cy="178.7" r="1.8" fill="#eeb48e"/><circle cx="176.1" cy="177.2" r="0.7" fill="#eeb48e"/><circle cx="179.3" cy="177.2" r="0.7" fill="#eeb48e"/></g><g opacity="0.6"><circle cx="178.7" cy="181.6" r="1.3" fill="#eeb48e"/><circle cx="177.1" cy="180.1" r="0.7" fill="#eeb48e"/><circle cx="180.3" cy="180.1" r="0.7" fill="#eeb48e"/></g><g opacity="0.6"><circle cx="194.7" cy="192.6" r="1.6" fill="#eeb48e"/><circle cx="193.1" cy="191.1" r="0.7" fill="#eeb48e"/><circle cx="196.3" cy="191.1" r="0.7" fill="#eeb48e"/></g><g opacity="0.6"><circle cx="201.1" cy="174.5" r="1.7" fill="#eeb48e"/><circle cx="199.5" cy="173.0" r="0.7" fill="#eeb48e"/><circle cx="202.7" cy="173.0" r="0.7" fill="#eeb48e"/></g><g opacity="0.6"><circle cx="192.4" cy="185.2" r="1.6" fill="#eeb48e"/><circle cx="190.8" cy="183.7" r="0.7" fill="#eeb48e"/><circle cx="194.0" cy="183.7" r="0.7" fill="#eeb48e"/></g><g opacity="0.6"><circle cx="200.0" cy="199.8" r="1.6" fill="#eeb48e"/><circle cx="198.4" cy="198.3" r="0.7" fill="#eeb48e"/><circle cx="201.6" cy="198.3" r="0.7" fill="#eeb48e"/></g><g opacity="0.6"><circle cx="220.9" cy="199.6" r="1.7" fill="#eeb48e"/><circle cx="219.3" cy="198.1" r="0.7" fill="#eeb48e"/><circle cx="222.5" cy="198.1" r="0.7" fill="#eeb48e"/></g><g opacity="0.6"><circle cx="220.5" cy="224.8" r="1.8" fill="#eeb48e"/><circle cx="218.9" cy="223.3" r="0.7" fill="#eeb48e"/><circle cx="222.1" cy="223.3" r="0.7" fill="#eeb48e"/></g><g opacity="0.6"><circle cx="210.7" cy="208.4" r="1.7" fill="#eeb48e"/><circle cx="209.1" cy="206.9" r="0.7" fill="#eeb48e"/><circle cx="212.3" cy="206.9" r="0.7" fill="#eeb48e"/></g><g opacity="0.6"><circle cx="203.6" cy="210.5" r="1.4" fill="#eeb48e"/><circle cx="202.0" cy="209.0" r="0.7" fill="#eeb48e"/><circle cx="205.2" cy="209.0" r="0.7" fill="#eeb48e"/></g><g opacity="0.6"><circle cx="206.2" cy="199.6" r="1.8" fill="#eeb48e"/><circle cx="204.6" cy="198.1" r="0.7" fill="#eeb48e"/><circle cx="207.8" cy="198.1" r="0.7" fill="#eeb48e"/></g><g opacity="0.6"><circle cx="206.5" cy="204.7" r="1.5" fill="#eeb48e"/><circle cx="204.9" cy="203.2" r="0.7" fill="#eeb48e"/><circle cx="208.1" cy="203.2" r="0.7" fill="#eeb48e"/></g><g opacity="0.6"><circle cx="226.5" cy="200.2" r="1.6" fill="#eeb48e"/><circle cx="224.9" cy="198.7" r="0.7" fill="#eeb48e"/><circle cx="228.1" cy="198.7" r="0.7" fill="#eeb48e"/></g><g opacity="0.6"><circle cx="217.8" cy="221.9" r="1.8" fill="#eeb48e"/><circle cx="216.2" cy="220.4" r="0.7" fill="#eeb48e"/><circle cx="219.4" cy="220.4" r="0.7" fill="#eeb48e"/></g><g opacity="0.6"><circle cx="226.3" cy="205.5" r="1.5" fill="#eeb48e"/><circle cx="224.7" cy="204.0" r="0.7" fill="#eeb48e"/><circle cx="227.9" cy="204.0" r="0.7" fill="#eeb48e"/></g><g opacity="0.55"><circle cx="180.5" cy="240.9" r="1.9" fill="#eeb48e"/><circle cx="178.9" cy="239.4" r="0.7" fill="#eeb48e"/><circle cx="182.1" cy="239.4" r="0.7" fill="#eeb48e"/></g><g opacity="0.55"><circle cx="173.8" cy="228.2" r="1.4" fill="#eeb48e"/><circle cx="172.2" cy="226.7" r="0.7" fill="#eeb48e"/><circle cx="175.4" cy="226.7" r="0.7" fill="#eeb48e"/></g><g opacity="0.55"><circle cx="176.5" cy="233.7" r="1.7" fill="#eeb48e"/><circle cx="174.9" cy="232.2" r="0.7" fill="#eeb48e"/><circle cx="178.1" cy="232.2" r="0.7" fill="#eeb48e"/></g><g opacity="0.55"><circle cx="177.4" cy="225.1" r="1.6" fill="#eeb48e"/><circle cx="175.8" cy="223.6" r="0.7" fill="#eeb48e"/><circle cx="179.0" cy="223.6" r="0.7" fill="#eeb48e"/></g><g opacity="0.55"><circle cx="180.8" cy="235.2" r="1.9" fill="#eeb48e"/><circle cx="179.2" cy="233.7" r="0.7" fill="#eeb48e"/><circle cx="182.4" cy="233.7" r="0.7" fill="#eeb48e"/></g><g opacity="0.55"><circle cx="191.1" cy="234.3" r="1.7" fill="#eeb48e"/><circle cx="189.5" cy="232.8" r="0.7" fill="#eeb48e"/><circle cx="192.7" cy="232.8" r="0.7" fill="#eeb48e"/></g><g opacity="0.55"><circle cx="190.6" cy="226.0" r="1.8" fill="#eeb48e"/><circle cx="189.0" cy="224.5" r="0.7" fill="#eeb48e"/><circle cx="192.2" cy="224.5" r="0.7" fill="#eeb48e"/></g><g opacity="0.55"><circle cx="194.0" cy="240.7" r="1.8" fill="#eeb48e"/><circle cx="192.4" cy="239.2" r="0.7" fill="#eeb48e"/><circle cx="195.6" cy="239.2" r="0.7" fill="#eeb48e"/></g><g opacity="0.55"><circle cx="222.2" cy="233.8" r="1.4" fill="#eeb48e"/><circle cx="220.6" cy="232.3" r="0.7" fill="#eeb48e"/><circle cx="223.8" cy="232.3" r="0.7" fill="#eeb48e"/></g><g opacity="0.55"><circle cx="227.3" cy="226.4" r="1.3" fill="#eeb48e"/><circle cx="225.7" cy="224.9" r="0.7" fill="#eeb48e"/><circle cx="228.9" cy="224.9" r="0.7" fill="#eeb48e"/></g><g opacity="0.55"><circle cx="218.4" cy="228.6" r="1.5" fill="#eeb48e"/><circle cx="216.8" cy="227.1" r="0.7" fill="#eeb48e"/><circle cx="220.0" cy="227.1" r="0.7" fill="#eeb48e"/></g><g opacity="0.55"><circle cx="215.1" cy="225.0" r="1.4" fill="#eeb48e"/><circle cx="213.5" cy="223.5" r="0.7" fill="#eeb48e"/><circle cx="216.7" cy="223.5" r="0.7" fill="#eeb48e"/></g><g opacity="0.55"><circle cx="216.1" cy="233.0" r="1.3" fill="#eeb48e"/><circle cx="214.5" cy="231.5" r="0.7" fill="#eeb48e"/><circle cx="217.7" cy="231.5" r="0.7" fill="#eeb48e"/></g><g opacity="0.55"><circle cx="232.4" cy="238.5" r="1.4" fill="#eeb48e"/><circle cx="230.8" cy="237.0" r="0.7" fill="#eeb48e"/><circle cx="234.0" cy="237.0" r="0.7" fill="#eeb48e"/></g><g opacity="0.55"><circle cx="219.3" cy="232.6" r="1.5" fill="#eeb48e"/><circle cx="217.7" cy="231.1" r="0.7" fill="#eeb48e"/><circle cx="220.9" cy="231.1" r="0.7" fill="#eeb48e"/></g><g opacity="0.35"><circle cx="344.2" cy="146.4" r="1.9" fill="#eeb48e"/><circle cx="342.6" cy="144.9" r="0.7" fill="#eeb48e"/><circle cx="345.8" cy="144.9" r="0.7" fill="#eeb48e"/></g><g opacity="0.35"><circle cx="350.4" cy="137.6" r="1.4" fill="#eeb48e"/><circle cx="348.8" cy="136.1" r="0.7" fill="#eeb48e"/><circle cx="352.0" cy="136.1" r="0.7" fill="#eeb48e"/></g><g opacity="0.35"><circle cx="343.8" cy="134.2" r="1.5" fill="#eeb48e"/><circle cx="342.2" cy="132.7" r="0.7" fill="#eeb48e"/><circle cx="345.4" cy="132.7" r="0.7" fill="#eeb48e"/></g><g opacity="0.35"><circle cx="356.9" cy="129.9" r="1.3" fill="#eeb48e"/><circle cx="355.3" cy="128.4" r="0.7" fill="#eeb48e"/><circle cx="358.5" cy="128.4" r="0.7" fill="#eeb48e"/></g><g opacity="0.35"><circle cx="359.1" cy="138.7" r="1.4" fill="#eeb48e"/><circle cx="357.5" cy="137.2" r="0.7" fill="#eeb48e"/><circle cx="360.7" cy="137.2" r="0.7" fill="#eeb48e"/></g><g opacity="0.55"><circle cx="356.9" cy="180.4" r="1.6" fill="#eeb48e"/><circle cx="355.3" cy="178.9" r="0.7" fill="#eeb48e"/><circle cx="358.5" cy="178.9" r="0.7" fill="#eeb48e"/></g><g opacity="0.55"><circle cx="371.3" cy="192.9" r="1.7" fill="#eeb48e"/><circle cx="369.7" cy="191.4" r="0.7" fill="#eeb48e"/><circle cx="372.9" cy="191.4" r="0.7" fill="#eeb48e"/></g><g opacity="0.55"><circle cx="347.6" cy="185.5" r="1.4" fill="#eeb48e"/><circle cx="346.0" cy="184.0" r="0.7" fill="#eeb48e"/><circle cx="349.2" cy="184.0" r="0.7" fill="#eeb48e"/></g><g opacity="0.55"><circle cx="364.5" cy="188.0" r="1.8" fill="#eeb48e"/><circle cx="362.9" cy="186.5" r="0.7" fill="#eeb48e"/><circle cx="366.1" cy="186.5" r="0.7" fill="#eeb48e"/></g><g opacity="0.55"><circle cx="349.9" cy="183.3" r="1.8" fill="#eeb48e"/><circle cx="348.3" cy="181.8" r="0.7" fill="#eeb48e"/><circle cx="351.5" cy="181.8" r="0.7" fill="#eeb48e"/></g><g opacity="0.55"><circle cx="371.5" cy="192.8" r="1.8" fill="#eeb48e"/><circle cx="369.9" cy="191.3" r="0.7" fill="#eeb48e"/><circle cx="373.1" cy="191.3" r="0.7" fill="#eeb48e"/></g><g opacity="0.55"><circle cx="366.0" cy="191.1" r="1.4" fill="#eeb48e"/><circle cx="364.4" cy="189.6" r="0.7" fill="#eeb48e"/><circle cx="367.6" cy="189.6" r="0.7" fill="#eeb48e"/></g><g opacity="0.55"><circle cx="356.1" cy="185.3" r="1.3" fill="#eeb48e"/><circle cx="354.5" cy="183.8" r="0.7" fill="#eeb48e"/><circle cx="357.7" cy="183.8" r="0.7" fill="#eeb48e"/></g><g opacity="0.55"><circle cx="339.9" cy="184.2" r="1.5" fill="#eeb48e"/><circle cx="338.3" cy="182.7" r="0.7" fill="#eeb48e"/><circle cx="341.5" cy="182.7" r="0.7" fill="#eeb48e"/></g><g opacity="0.55"><circle cx="362.5" cy="239.0" r="1.6" fill="#eeb48e"/><circle cx="360.9" cy="237.5" r="0.7" fill="#eeb48e"/><circle cx="364.1" cy="237.5" r="0.7" fill="#eeb48e"/></g><g opacity="0.55"><circle cx="367.7" cy="239.7" r="1.9" fill="#eeb48e"/><circle cx="366.1" cy="238.2" r="0.7" fill="#eeb48e"/><circle cx="369.3" cy="238.2" r="0.7" fill="#eeb48e"/></g><g opacity="0.55"><circle cx="355.7" cy="221.3" r="1.4" fill="#eeb48e"/><circle cx="354.1" cy="219.8" r="0.7" fill="#eeb48e"/><circle cx="357.3" cy="219.8" r="0.7" fill="#eeb48e"/></g><g opacity="0.55"><circle cx="352.1" cy="220.9" r="1.7" fill="#eeb48e"/><circle cx="350.5" cy="219.4" r="0.7" fill="#eeb48e"/><circle cx="353.7" cy="219.4" r="0.7" fill="#eeb48e"/></g><g opacity="0.55"><circle cx="366.9" cy="236.2" r="1.6" fill="#eeb48e"/><circle cx="365.3" cy="234.7" r="0.7" fill="#eeb48e"/><circle cx="368.5" cy="234.7" r="0.7" fill="#eeb48e"/></g><g opacity="0.55"><circle cx="361.7" cy="235.2" r="1.4" fill="#eeb48e"/><circle cx="360.1" cy="233.7" r="0.7" fill="#eeb48e"/><circle cx="363.3" cy="233.7" r="0.7" fill="#eeb48e"/></g><g opacity="0.55"><circle cx="361.9" cy="237.8" r="1.8" fill="#eeb48e"/><circle cx="360.3" cy="236.3" r="0.7" fill="#eeb48e"/><circle cx="363.5" cy="236.3" r="0.7" fill="#eeb48e"/></g><g opacity="0.55"><circle cx="363.8" cy="227.5" r="1.4" fill="#eeb48e"/><circle cx="362.2" cy="226.0" r="0.7" fill="#eeb48e"/><circle cx="365.4" cy="226.0" r="0.7" fill="#eeb48e"/></g><g opacity="0.55"><circle cx="361.6" cy="254.0" r="1.8" fill="#eeb48e"/><circle cx="360.0" cy="252.5" r="0.7" fill="#eeb48e"/><circle cx="363.2" cy="252.5" r="0.7" fill="#eeb48e"/></g><g opacity="0.55"><circle cx="365.4" cy="254.9" r="1.5" fill="#eeb48e"/><circle cx="363.8" cy="253.4" r="0.7" fill="#eeb48e"/><circle cx="367.0" cy="253.4" r="0.7" fill="#eeb48e"/></g><g opacity="0.55"><circle cx="364.9" cy="259.9" r="1.4" fill="#eeb48e"/><circle cx="363.3" cy="258.4" r="0.7" fill="#eeb48e"/><circle cx="366.5" cy="258.4" r="0.7" fill="#eeb48e"/></g><g opacity="0.55"><circle cx="347.7" cy="251.3" r="1.8" fill="#eeb48e"/><circle cx="346.1" cy="249.8" r="0.7" fill="#eeb48e"/><circle cx="349.3" cy="249.8" r="0.7" fill="#eeb48e"/></g><g opacity="0.55"><circle cx="361.9" cy="251.2" r="1.8" fill="#eeb48e"/><circle cx="360.3" cy="249.7" r="0.7" fill="#eeb48e"/><circle cx="363.5" cy="249.7" r="0.7" fill="#eeb48e"/></g><g opacity="0.55"><circle cx="365.6" cy="258.9" r="1.5" fill="#eeb48e"/><circle cx="364.0" cy="257.4" r="0.7" fill="#eeb48e"/><circle cx="367.2" cy="257.4" r="0.7" fill="#eeb48e"/></g><g opacity="0.4"><circle cx="178.2" cy="251.6" r="1.3" fill="#eeb48e"/><circle cx="176.6" cy="250.1" r="0.7" fill="#eeb48e"/><circle cx="179.8" cy="250.1" r="0.7" fill="#eeb48e"/></g><g opacity="0.4"><circle cx="184.6" cy="257.8" r="1.6" fill="#eeb48e"/><circle cx="183.0" cy="256.3" r="0.7" fill="#eeb48e"/><circle cx="186.2" cy="256.3" r="0.7" fill="#eeb48e"/></g><g opacity="0.4"><circle cx="184.0" cy="255.2" r="1.8" fill="#eeb48e"/><circle cx="182.4" cy="253.7" r="0.7" fill="#eeb48e"/><circle cx="185.6" cy="253.7" r="0.7" fill="#eeb48e"/></g>
<ellipse cx="300" cy="366" rx="80" ry="13" fill="url(#shadow)"/>
<!-- tail left -->
<path d="M236 304 L233 331 Q222 328 210 317 Q196 303 189 290 L183 281 L176.5 275 L184 276 Q182 268 183 261 Q187 247 203 245 Q215 246 217 256 L221 261 L218 266 Q219 282 224 294 Q229 301 236 304 Z" fill="url(#tailg)" stroke="#6e5e50" stroke-width="0.6"/>
<!-- tail right -->
<path d="M324 226 Q342 236 351 258 Q358 282 355 303 Q351 320 339 322 L333 300 Z" fill="url(#tail2)" stroke="#8a8a8a" stroke-width="0.6"/>
<!-- feet -->
<path d="M240 344 Q236 356 240 362 Q248 368 262 367 Q275 364 284 352 L282 345 Z" fill="#fbfbfb" stroke="#777" stroke-width="0.7"/>
<path d="M286 346 Q295 362 312 367 Q326 368 330 360 Q333 352 328 344 Z" fill="#fbfbfb" stroke="#777" stroke-width="0.7"/>
<path d="M258 352 L257 362 M272 350 L270 360 M312 352 L314 362" stroke="#aaa" stroke-width="0.5"/>
<!-- skirt -->
<path d="M238 236 Q236 290 230 337 Q235 345 262 346 Q285 346 300 349 Q325 347 341 340 Q338 300 332 270 Q328 250 322 240 Q300 256 270 254 Q248 248 238 236 Z" fill="#e6802e"/>
<path d="M238 236 Q236 290 230 337 Q235 345 262 346 Q285 346 300 349 Q325 347 341 340 Q338 300 332 270 Q328 250 322 240 Q300 256 270 254 Q248 248 238 236 Z" fill="#e6802e" filter="url(#noise)" opacity="0.55"/>
<path d="M267.5 292 V345 M308.5 297 V347" stroke="#c0601c" stroke-width="0.6" opacity=".8"/>
<path d="M238 236 Q236 290 230 337 Q235 345 262 346 Q285 346 300 349 Q325 347 341 340 Q338 300 332 270 Q328 250 322 240 Q300 256 270 254 Q248 248 238 236 Z" fill="#e6802e" filter="url(#noise2)" opacity="0.7"/>
<path d="M262 290 L270 290 L272 346 L258 346 Z" fill="url(#fold)"/><path d="M303 295 L312 295 L315 348 L300 348 Z" fill="url(#fold)"/><path d="M230 337 Q236 300 238 270 L246 272 Q244 310 242 344 Z" fill="#c85a18" opacity="0.18"/>
<!-- right arm -->
<path d="M320 222 L337 222 Q341 238 339 250 Q336 256 329 255 L322 250 Z" fill="#f2f2f2" stroke="#8a8a8a" stroke-width="0.5"/>
<path d="M314 180 L328 177 L330 197 Q337 202 336 214 Q335 223 326 224 L318 222 Z" fill="#f2f2f2" stroke="#8a8a8a" stroke-width="0.5"/>
<path d="M314 180 L328 177 L329 196 L315 197 Z" fill="#d6d2ce"/>
<path d="M330 201 L335.5 203 L335.5 213 L331 212 Z" fill="#1e2a2a"/>
<!-- dark brown side hair -->
<path d="M239 106 L250 106 L257 151 Q251 153 247 151 L242 149 L241 145 L237 141 L239 135 L236 129 L238 123 L236 117 L238 112 Z" fill="#9c6b3c"/>
<path d="M314 104 L324 106 L326 114 L329 120 L328 127 L331 133 L329 139 L331 145 L324 150 L309 147 Z" fill="#9c6b3c"/>
<!-- yellow dress -->
<path d="M259 147 Q250 151 246 160 Q242 172 241.5 186 L246 190 Q240 200 238 212 Q235.5 225 238 237 Q250 252 270 255 Q300 257 323 243 Q319 215 317 200 L315 182 L328 178 Q326 162 320 153 Q314 145 309 145 Q296 152 284 154 Q272 153 266 147 Z" fill="#f2dc84" stroke="#a89458" stroke-width="0.45"/>
<path d="M259 147 Q250 151 246 160 Q242 172 241.5 186 L246 190 Q240 200 238 212 Q235.5 225 238 237 Q250 252 270 255 Q300 257 323 243 Q319 215 317 200 L315 182 L328 178 Q326 162 320 153 Q314 145 309 145 Q296 152 284 154 Q272 153 266 147 Z" fill="#f2dc84" filter="url(#noise3)" opacity="0.6"/>
<path d="M241.5 186 Q249 184 257 181" stroke="#f6eed2" stroke-width="1.6" fill="none"/>
<path d="M242.5 187.5 L250 186 L247 196 Z" fill="#d8d2cc"/>
<path d="M314 181 L328 178" stroke="#f6eed2" stroke-width="1.8" fill="none"/>
<path d="M259 149 Q253 162 256 183" stroke="#c9b060" stroke-width=".6" fill="none"/>
<path d="M309 146 Q314 160 315 181" stroke="#c9b060" stroke-width=".5" fill="none"/>
<path d="M246 190 Q256 192 262 188" stroke="#c9b060" stroke-width=".6" fill="none"/>
<!-- collar -->
<path d="M266 147 Q274 154 284 154 Q296 152 303 146 L300 144 Q284 148 268 144 Z" fill="#d8d2cc"/>
<!-- face -->
<path d="M248 106 Q282 100 316 105 Q320 122 320 136 L317 140 L319 143 Q312 147 302 148 Q292 151 281 150 Q266 150 256 147 L251 144 L249 140 L246 138 Q246 122 248 106 Z" fill="#ffffff"/>
<!-- ears -->
<path d="M236 67 Q247 65.5 259 67.5 Q252 86 245 106 Q236 104 233.5 98 Q230 88 231 78 Q232 70 236 67 Z" fill="url(#earg)" stroke="#8a8a8a" stroke-width="0.6"/>
<path d="M303 68 Q318 65.5 331.5 67 Q335.5 72 335 84 Q334 95 329 100 Q325 104 320 106 Q312 86 303 68 Z" fill="url(#earg2)" stroke="#8a8a8a" stroke-width="0.6"/>
<!-- hair -->
<path d="M256 67.5 Q266 62.5 281 63 Q294 63.5 303.5 67.5 L306 65 L307.5 71 Q311 86 314 103 L300 102 L288 104 L283 109 L279 101 L272 104 L262 104 L250 105 L243 108 L240 104 Q238 96 240.5 87 Q246 75 256 67.5 Z" fill="#d8ab80"/>
<path d="M262 92 L259 104 M288 90 L284 106 M270 96 L268 104 M300 92 L302 102 M252 92 L247 104 M276 70 L268 78" stroke="#bd8f66" stroke-width="0.6"/>
<!-- headband -->
<path d="M245 79 Q266 84 286 84.5 L286 88.5 Q266 88 244.5 83 Z" fill="#ef6f3a"/>
<path d="M294 86 Q288 78 284 80 Q282 86 286 88 Q283 92 286 94 Q292 92 294 86 Z" fill="#ef6f3a"/>
<path d="M294 86 Q300 77 305 79 Q307 86 303 88 Q306 93 303 96 Q297 94 294 86 Z" fill="#ef6f3a"/>
<circle cx="294" cy="86" r="2" fill="#dd5e28"/>
<ellipse cx="297" cy="95.6" rx="2.3" ry="1.5" fill="#6a4a30"/>
<!-- eyes -->
<ellipse cx="262.5" cy="116.5" rx="9.3" ry="8.6" fill="#eef6f3"/>
<ellipse cx="264" cy="116.8" rx="7.6" ry="7.8" fill="#c6e4dc" stroke="#5d9f98" stroke-width=".8"/>
<ellipse cx="265.5" cy="116.5" rx="6" ry="7.4" fill="#0a0f0f"/>
<path d="M262 111.5 L265 115" stroke="#ffffff" stroke-width="2.2" stroke-linecap="round"/>
<path d="M252.5 113.5 Q257 107.5 264 107.8 Q269 108 272 110" stroke="#0a0a0a" stroke-width="1.9" fill="none"/>
<ellipse cx="299" cy="112.7" rx="10" ry="8.4" fill="#eef6f3"/>
<ellipse cx="299.5" cy="113" rx="7.8" ry="7.8" fill="#c6e4dc" stroke="#5d9f98" stroke-width=".8"/>
<ellipse cx="300.5" cy="112.8" rx="6.8" ry="7.5" fill="#0a0f0f"/>
<path d="M296 108.5 L298.5 112" stroke="#ffffff" stroke-width="2.2" stroke-linecap="round"/>
<path d="M289.5 108 Q296 103 302 103.8 Q307 104.5 309 108.5" stroke="#0a0a0a" stroke-width="1.9" fill="none"/>
<ellipse cx="280.3" cy="122.5" rx="4.7" ry="2.8" fill="#d26a4a"/>
<path d="M276 132 Q280 135 283 131 Q286 135 291 132 M283 126 V131" stroke="#a8a8a8" stroke-width=".6" fill="none"/>
<!-- logo -->
<text x="160" y="65" font-family="Liberation Serif" font-style="italic" font-size="9.5" fill="#d6c68e" letter-spacing="-0.9" opacity=".85">eSnyBrown</text>
<rect x="170" y="69.5" width="19" height="0.8" fill="#e0d4b0"/>
</g>
</svg>
</body></html>
